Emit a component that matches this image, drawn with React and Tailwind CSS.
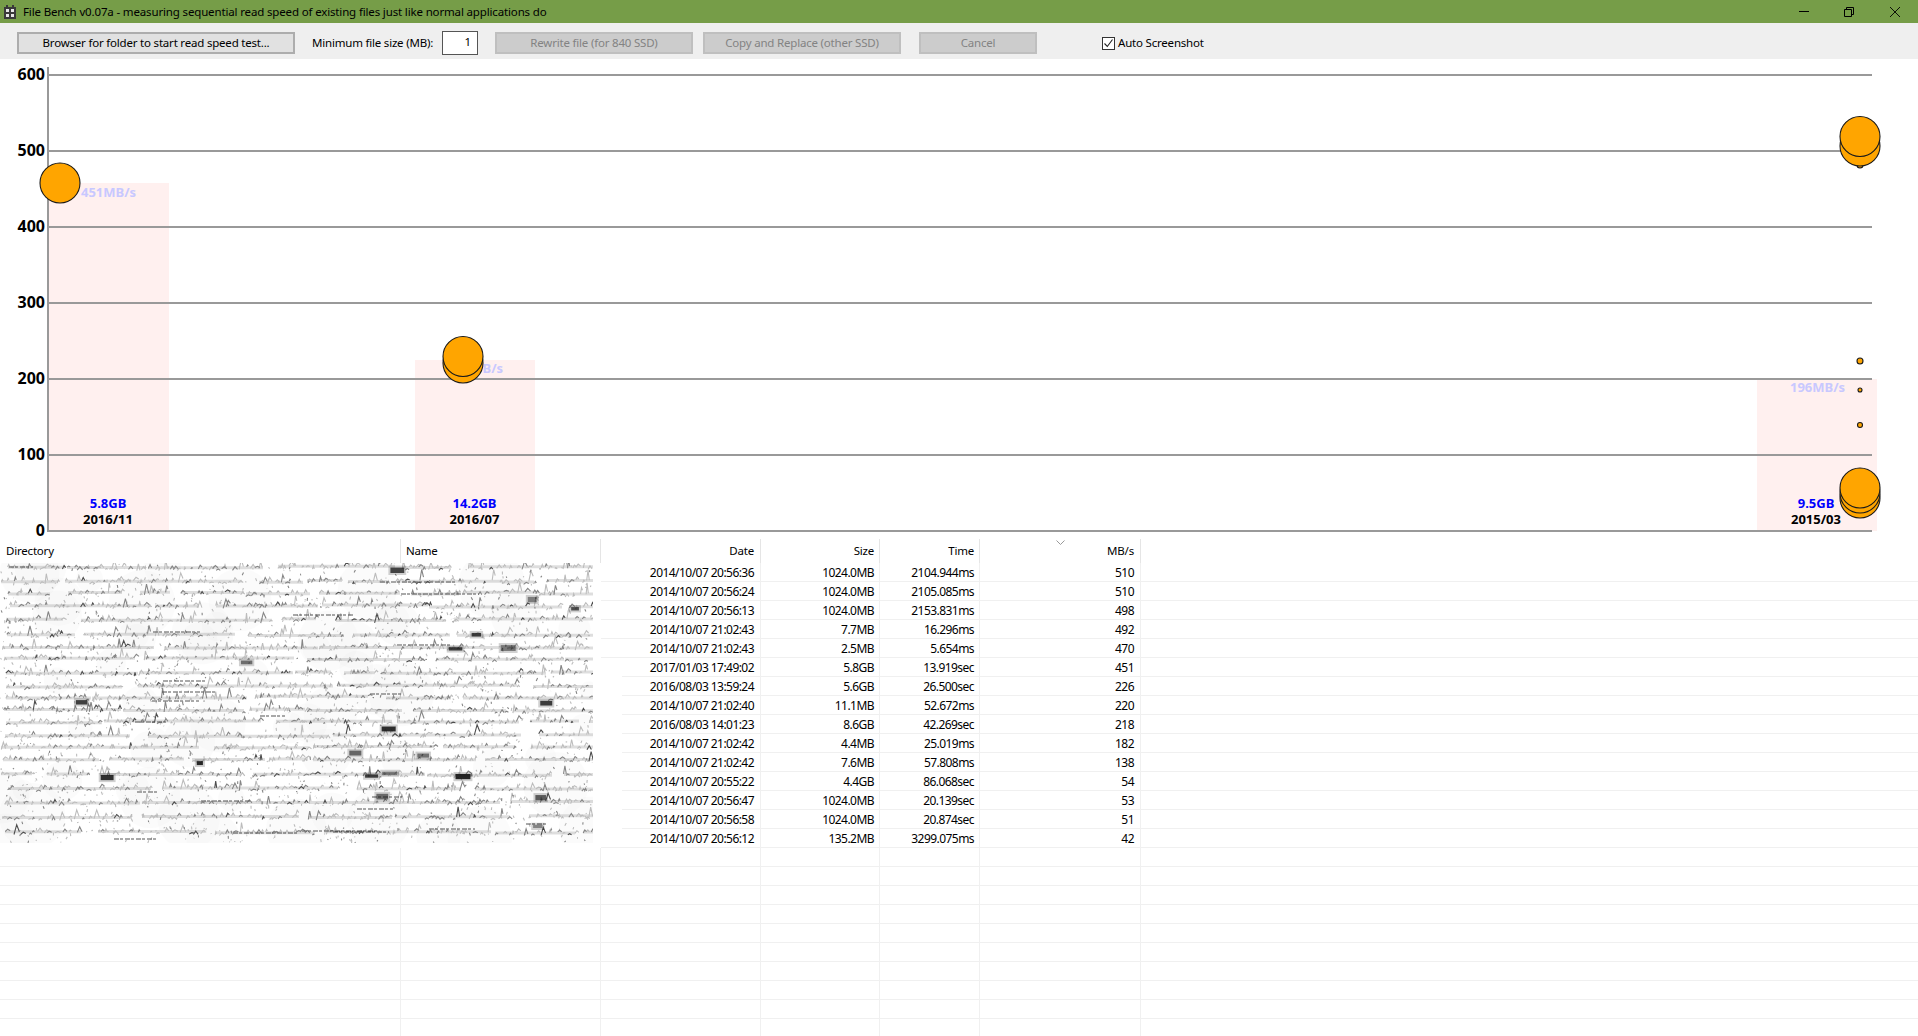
const FONT = "font-['Noto_Sans',sans-serif]";

const rows = [
  ["2014/10/07 20:56:36", "1024.0MB", "2104.944ms", "510"],
  ["2014/10/07 20:56:24", "1024.0MB", "2105.085ms", "510"],
  ["2014/10/07 20:56:13", "1024.0MB", "2153.831ms", "498"],
  ["2014/10/07 21:02:43", "7.7MB", "16.296ms", "492"],
  ["2014/10/07 21:02:43", "2.5MB", "5.654ms", "470"],
  ["2017/01/03 17:49:02", "5.8GB", "13.919sec", "451"],
  ["2016/08/03 13:59:24", "5.6GB", "26.500sec", "226"],
  ["2014/10/07 21:02:40", "11.1MB", "52.672ms", "220"],
  ["2016/08/03 14:01:23", "8.6GB", "42.269sec", "218"],
  ["2014/10/07 21:02:42", "4.4MB", "25.019ms", "182"],
  ["2014/10/07 21:02:42", "7.6MB", "57.808ms", "138"],
  ["2014/10/07 20:55:22", "4.4GB", "86.068sec", "54"],
  ["2014/10/07 20:56:47", "1024.0MB", "20.139sec", "53"],
  ["2014/10/07 20:56:58", "1024.0MB", "20.874sec", "51"],
  ["2014/10/07 20:56:12", "135.2MB", "3299.075ms", "42"],
];

const emptyRows = Array.from({ length: 10 }, () => ["", "", "", ""]);

// seeded so the smeared block looks the same on every run
function makeRandom(seed) {
  let a = seed;
  return () => {
    a = (a + 0x6d2b79f5) | 0;
    let t = Math.imul(a ^ (a >>> 15), 1 | a);
    t = (t + Math.imul(t ^ (t >>> 7), 61 | t)) ^ t;
    return ((t ^ (t >>> 14)) >>> 0) / 4294967296;
  };
}

function buildSmear() {
  const r = makeRandom(71);
  const bands = [];
  const light = [];
  const mid = [];
  const dark = [];
  const streaks = [];
  const blocks = [];
  const clouds = [];
  for (let y = 568; y < 843; y += 11 + r() * 5) {
    let x = r() * 10;
    while (x < 592) {
      const len = 30 + r() * 170;
      const dy = y + r() * 2 - 1;
      bands.push(`M${x.toFixed(0)} ${dy.toFixed(1)}h${len.toFixed(0)}`);
      const end = Math.min(x + len, 592);
      for (let gx = x; gx < end; gx += 2 + r() * 7) {
        // mostly low ticks on the line, the odd one climbs into the gap above
        const h = r() < 0.12 ? 5 + r() * 6 : 1 + r() * 3;
        const w = 0.8 + r() * 2;
        const off = r() * 4 - 1;
        const seg = `M${gx.toFixed(1)} ${(dy + off).toFixed(1)}l${w.toFixed(1)} ${(-h).toFixed(1)}l${w.toFixed(1)} ${(h * (0.4 + r() * 0.6)).toFixed(1)}`;
        const pick = r();
        if (pick < 0.62) light.push(seg);
        else if (pick < 0.94) mid.push(seg);
        else dark.push(seg);
      }
      x += len + r() * 20;
    }
  }
  for (let i = 0; i < 1500; i++) {
    const x = r() * 592;
    const y = 565 + r() * 278;
    const seg = `M${x.toFixed(1)} ${y.toFixed(1)}l${(r() * 3 - 1.5).toFixed(1)} ${(r() * 3).toFixed(1)}`;
    (r() < 0.75 ? light : mid).push(seg);
  }
  for (let i = 0; i < 22; i++) {
    const x = r() * 540;
    const y = 566 + r() * 274;
    streaks.push(`M${x.toFixed(0)} ${y.toFixed(0)}h${(20 + r() * 60).toFixed(0)}`);
  }
  for (let i = 0; i < 60; i++) {
    clouds.push({ cx: r() * 592, cy: 565 + r() * 278, r: 8 + r() * 26 });
  }
  for (let i = 0; i < 20; i++) {
    blocks.push({
      x: r() * 575,
      y: 566 + r() * 270,
      w: 6 + r() * 9,
      h: 3 + r() * 3,
      o: 0.4 + r() * 0.5,
    });
  }
  return { bands, light, mid, dark, streaks, blocks, clouds };
}

const smear = buildSmear();

function Smear() {
  return (
    <svg className="absolute left-0 top-0" width="593" height="280" viewBox="0 564 593 280">
      <defs>
        <filter id="soft" x="0" y="0" width="100%" height="100%">
          <feGaussianBlur stdDeviation="0.55" />
        </filter>
      </defs>
      <g filter="url(#soft)" fill="none">
        {smear.clouds.map((c, i) => (
          <circle key={i} cx={c.cx} cy={c.cy} r={c.r} fill="#000" fillOpacity="0.015" />
        ))}
        <path d={smear.bands.join("")} stroke="#000" strokeOpacity="0.13" strokeWidth="3" />
        <path d={smear.light.join("")} stroke="#bcbcbc" strokeWidth="1.1" />
        <path d={smear.mid.join("")} stroke="#858585" strokeWidth="1.1" />
        <path d={smear.dark.join("")} stroke="#4d4d4d" strokeWidth="1.1" />
        <path d={smear.streaks.join("")} stroke="#555" strokeWidth="1.2" strokeDasharray="5 1 3 2" />
        {smear.blocks.map((b, i) => (
          <g key={i}>
            <rect x={b.x - 2} y={b.y - 2} width={b.w + 4} height={b.h + 4} fill="#000" fillOpacity="0.18" />
            <rect x={b.x} y={b.y} width={b.w} height={b.h} fill="#111" fillOpacity={b.o} />
          </g>
        ))}
      </g>
    </svg>
  );
}

function AppIcon() {
  return (
    <svg width="14" height="15" viewBox="0 0 14 15" className="ml-[3px] mr-[6px] shrink-0">
      <path d="M1 3h2V1h2v2h4V1h2v2h2v12H1z" fill="#3a3a3a" />
      <path d="M3 5h3v3H3zM8 5h3v3H8zM3 10h3v3H3zM8 10h3v3H8z" fill="#e8e8e8" />
    </svg>
  );
}

function TitleBar() {
  return (
    <div className="flex h-[23px] items-center bg-[#769d48] text-[11.5px] tracking-[-0.15px] text-black">
      <AppIcon />
      <span className="whitespace-nowrap">File Bench v0.07a - measuring sequential read speed of existing files just like normal applications do</span>
      <div className="ml-auto flex items-center pr-[18px]">
        <svg width="10" height="2" viewBox="0 0 10 2" className="mr-[35px]">
          <rect width="10" height="1" fill="#000" />
        </svg>
        <svg width="10" height="10" viewBox="0 0 10 10" fill="none" stroke="#000" className="mr-[36px]">
          <path d="M0.5 2.5h7v7h-7z M2.5 2.5v-2h7v7h-2" />
        </svg>
        <svg width="10" height="10" viewBox="0 0 10 10" fill="none" stroke="#000" strokeWidth="0.9">
          <path d="M0 0L10 10M10 0L0 10" />
        </svg>
      </div>
    </div>
  );
}

function ToolButton({ label, className, disabled }) {
  return (
    <div
      className={`flex h-[22px] shrink-0 items-center justify-center border-2 ${
        disabled ? "border-[#bfbfbf] bg-[#cccccc] text-[#838383]" : "border-[#adadad] bg-[#e1e1e1] text-black"
      } ${className}`}
    >
      {label}
    </div>
  );
}

function Toolbar() {
  return (
    <div className="flex h-[36px] items-center bg-[#efefef] pl-[17px] pt-[4px] text-[11.5px] tracking-[-0.2px] text-black">
      <ToolButton label="Browser for folder to start read speed test..." className="w-[278px]" />
      <span className="ml-[17px] w-[125px] whitespace-nowrap">Minimum file size (MB):</span>
      <div className="ml-[5px] flex h-[24px] w-[36px] shrink-0 items-start justify-end border border-[#555] bg-white pr-[6px] pt-[1px]">1</div>
      <ToolButton label="Rewrite file (for 840 SSD)" className="ml-[17px] w-[198px]" disabled />
      <ToolButton label="Copy and Replace (other SSD)" className="ml-[10px] w-[198px]" disabled />
      <ToolButton label="Cancel" className="ml-[18px] w-[118px]" disabled />
      <div className="ml-[65px] flex h-[13px] w-[13px] items-center justify-center border border-[#333] bg-white">
        <svg width="11" height="11" viewBox="0 0 11 11" fill="none" stroke="#222" strokeWidth="1.1">
          <path d="M1.5 5.5l2.8 3L9.5 1.5" />
        </svg>
      </div>
      <span className="ml-[3px] whitespace-nowrap">Auto Screenshot</span>
    </div>
  );
}

const gridLines = [
  [600, 75],
  [500, 151],
  [400, 227],
  [300, 303],
  [200, 379],
  [100, 455],
  [0, 531],
];

const bars = [
  { x: 48, w: 121, top: 183, gb: "5.8GB", date: "2016/11", cx: 108 },
  { x: 415, w: 120, top: 360, gb: "14.2GB", date: "2016/07", cx: 474.5 },
  { x: 1757, w: 120, top: 379, gb: "9.5GB", date: "2015/03", cx: 1816 },
];

const speedLabels = [
  { text: "451MB/s", x: 81, y: 193 },
  { text: "226MB/s", x: 448, y: 369 },
  { text: "196MB/s", x: 1790, y: 388 },
];

// bottom circles first, later ones paint over them
const circles = [
  [60, 183, 20],
  [463, 363, 20],
  [463, 356.5, 20],
  [1860, 165, 3],
  [1860, 146, 20],
  [1860, 136.5, 20],
  [1860, 361, 3],
  [1860, 390, 2],
  [1860, 425, 2.5],
  [1860, 498, 20],
  [1860, 493, 20],
  [1860, 488, 20],
];

function Chart() {
  return (
    <svg width="1918" height="475" viewBox="0 59 1918 475" className="block overflow-visible">
      {bars.map((b) => (
        <rect key={b.gb} x={b.x} y={b.top} width={b.w} height={531 - b.top} fill="#fff0ef" />
      ))}
      {gridLines.map(([value, y]) => (
        <g key={value}>
          <rect x="48" y={y - 1} width="1824" height="2" fill="#999999" />
          <text x="45" y={y + 1} textAnchor="end" dominantBaseline="middle" fontSize="16" fontWeight="700" fill="#000">
            {value}
          </text>
        </g>
      ))}
      <rect x="47" y="67" width="2" height="465" fill="#999999" />
      {speedLabels.map((l) => (
        <text key={l.text} x={l.x} y={l.y} dominantBaseline="middle" fontSize="13" fontWeight="700" fill="#c8c8ff">
          {l.text}
        </text>
      ))}
      {bars.map((b) => (
        <g key={b.date} textAnchor="middle" fontSize="13" fontWeight="700">
          <text x={b.cx} y={504} dominantBaseline="middle" fill="#0000ff">
            {b.gb}
          </text>
          <text x={b.cx} y={520} dominantBaseline="middle" fill="#000">
            {b.date}
          </text>
        </g>
      ))}
      {circles.map(([cx, cy, r], i) => (
        <circle key={i} cx={cx} cy={cy} r={r} fill="#ffa500" stroke="#1a1a1a" strokeWidth="1.1" />
      ))}
    </svg>
  );
}

const colClass = [
  "w-[401px] border-r",
  "w-[200px] border-r",
  "w-[160px] border-r justify-end pr-[6px]",
  "w-[119px] border-r justify-end pr-[5px]",
  "w-[100px] border-r justify-end pr-[5px]",
  "w-[161px] border-r justify-end pr-[6px]",
];

function HeaderCell({ className, children }) {
  return <div className={`flex h-full shrink-0 items-center border-[#e5e5e5] ${className}`}>{children}</div>;
}

function ListHeader() {
  return (
    <div className="relative mt-[5px] flex h-[24px] text-[11.5px] tracking-[-0.2px] text-black">
      <HeaderCell className={`${colClass[0]} pl-[6px]`}>Directory</HeaderCell>
      <HeaderCell className={`${colClass[1]} pl-[5px]`}>Name</HeaderCell>
      <HeaderCell className={colClass[2]}>Date</HeaderCell>
      <HeaderCell className={colClass[3]}>Size</HeaderCell>
      <HeaderCell className={colClass[4]}>Time</HeaderCell>
      <HeaderCell className={colClass[5]}>MB/s</HeaderCell>
      <svg width="9" height="5" viewBox="0 0 9 5" fill="none" stroke="#999" className="absolute left-[1056px] top-[1px]">
        <path d="M0.5 0.5L4.5 4.5L8.5 0.5" />
      </svg>
    </div>
  );
}

function Row({ cells }) {
  return (
    <div className="flex h-[19px] shrink-0 items-center border-b border-[#f0f0f0] text-[12px] tracking-[-0.55px] text-black">
      <div className={`${colClass[0]} flex h-full shrink-0 border-[#f0f0f0]`} />
      <div className={`${colClass[1]} flex h-full shrink-0 border-[#f0f0f0]`} />
      {cells.map((text, i) => (
        <div key={i} className={`${colClass[i + 2]} flex h-full shrink-0 items-center border-[#f0f0f0] pt-[1px]`}>
          {text}
        </div>
      ))}
    </div>
  );
}

export default function App() {
  return (
    <div className={`h-[1036px] w-[1918px] overflow-hidden bg-white ${FONT}`}>
      <TitleBar />
      <Toolbar />
      <Chart />
      <ListHeader />
      <div className="relative">
        {rows.map((cells, i) => (
          <Row key={i} cells={cells} />
        ))}
        {emptyRows.map((cells, i) => (
          <Row key={i} cells={cells} />
        ))}
        {/* blanked-out directory and name columns */}
        <div className="absolute left-0 top-0 h-[285px] w-[601px] bg-white" />
        <div className="absolute left-[600px] top-[100px] h-[184px] w-[22px] bg-white" />
        <Smear />
      </div>
    </div>
  );
}
